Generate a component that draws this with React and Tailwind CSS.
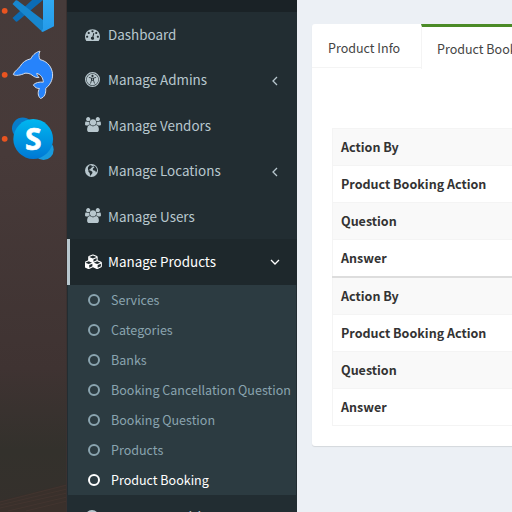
import React from 'react';

const TACHO = "M384 1152q0-53-37.5-90.5t-90.5-37.5-90.5 37.5-37.5 90.5 37.5 90.5 90.5 37.5 90.5-37.5 37.5-90.5zm192-448q0-53-37.5-90.5t-90.5-37.5-90.5 37.5-37.5 90.5 37.5 90.5 90.5 37.5 90.5-37.5 37.5-90.5zm428 481l101-382q6-26-7.5-48.5t-38.5-29.5-48 6.5-30 39.5l-101 382q-60 5-107 43.5t-63 98.5q-20 77 20 146t117 89 146-20 89-117q16-60-6-117t-72-91zm660-33q0-53-37.5-90.5t-90.5-37.5-90.5 37.5-37.5 90.5 37.5 90.5 90.5 37.5 90.5-37.5 37.5-90.5zm-640-640q0-53-37.5-90.5t-90.5-37.5-90.5 37.5-37.5 90.5 37.5 90.5 90.5 37.5 90.5-37.5 37.5-90.5zm448 192q0-53-37.5-90.5t-90.5-37.5-90.5 37.5-37.5 90.5 37.5 90.5 90.5 37.5 90.5-37.5 37.5-90.5zm320 448q0 261-141 483-19 29-54 29h-1402q-35 0-54-29-141-221-141-483 0-182 71-348t191-286 286-191 348-71 348 71 286 191 191 286 71 348z";
const USERS = "M593 896q-162 5-265 128h-134q-82 0-138-40.5t-56-118.5q0-353 124-353 6 0 43.5 21t97.5 42.5 119 21.5q67 0 133-23-5 37-5 66 0 139 81 256zm1071 637q0 120-73 189.5t-194 69.5h-874q-121 0-194-69.5t-73-189.5q0-53 3.5-103.5t14-109 26.5-108.5 43-97.5 62-81 85.5-53.5 111.5-20q10 0 43 21.5t73 48 107 48 135 21.5 135-21.5 107-48 73-48 43-21.5q61 0 111.5 20t85.5 53.5 62 81 43 97.5 26.5 108.5 14 109 3.5 103.5zm-1024-1277q0 106-75 181t-181 75-181-75-75-181 75-181 181-75 181 75 75 181zm704 384q0 159-112.5 271.5t-271.5 112.5-271.5-112.5-112.5-271.5 112.5-271.5 271.5-112.5 271.5 112.5 112.5 271.5zm576 225q0 78-56 118.5t-138 40.5h-134q-103-123-265-128 81-117 81-256 0-29-5-66 66 23 133 23 59 0 119-21.5t97.5-42.5 43.5-21q124 0 124 353zm-128-609q0 106-75 181t-181 75-181-75-75-181 75-181 181-75 181 75 75 181z";
const CUBES = "M512 1664l384-192v-314l-384 164v342zm-64-454l404-173-404-173-404 173zm1088 454l384-192v-314l-384 164v342zm-64-454l404-173-404-173-404 173zm-448-293l384-165v-266l-384 164v267zm-64-379l441-189-441-189-441 189zm1088 518v416q0 36-19 67t-52 47l-448 224q-25 14-57 14t-57-14l-448-224q-4-2-7-4-2 2-7 4l-448 224q-25 14-57 14t-57-14l-448-224q-33-16-52-47t-19-67v-416q0-38 21.5-70t56.5-48l434-186v-400q0-38 21.5-70t56.5-48l448-192q23-10 50-10t50 10l448 192q35 16 56.5 48t21.5 70v400l434 186q36 16 57 48t21 70z";

function Glyph({ kind }) {
  if (kind === 'tacho')
    return <svg className="h-[15px] w-[15px]" viewBox="0 0 1792 1792" fill="currentColor"><path d={TACHO} /></svg>;
  if (kind === 'users')
    return <svg className="h-[15px] w-[16px]" viewBox="0 0 1920 1792" fill="currentColor"><path d={USERS} /></svg>;
  if (kind === 'cubes')
    return <svg className="h-[15px] w-[19px] shrink-0" viewBox="0 0 2304 1792" fill="currentColor"><path d={CUBES} /></svg>;
  if (kind === 'globe')
    return (
      <svg className="h-[13px] w-[13px]" viewBox="0 0 13 13">
        <circle cx="6.5" cy="6.5" r="6.5" fill="currentColor" />
        <path d="M4.2 1.5L6.6 1l-.4 1.2 1.2-.3.5.9-1.8 1.1-.9 1.4-1.3.4.9.8 1.2.2 1.5 1.3-.3 1.4-1.1 1.3-.6 1.2-.6-1.1-.2-1.9-1.3-1.1.1-1L2.9 5 3 3.4zM8.6 1.5l2.1 1.3 1.2 2.3.1 2-1.1 1.4-.6-1.8-1.7-.1-.9-1.4.8-1.3 1.2-.5-1.2-.6z" fill="#222d32" />
      </svg>
    );
  return (
    <svg className="h-[15px] w-[15px]" viewBox="0 0 15 15">
      <circle cx="7.5" cy="7.5" r="6.9" fill="none" stroke="currentColor" strokeWidth="1.2" />
      <circle cx="7.5" cy="7.5" r="5.8" fill="currentColor" />
      <circle cx="7.5" cy="3.9" r="1.1" fill="#222d32" />
      <path d="M3.9 5.4l2.6.7v2.2l-1 3.2M11.1 5.4l-2.6.7v2.2l1 3.2M6.6 6.2h1.8v2.2H6.6z" fill="none" stroke="#222d32" strokeWidth=".8" strokeLinejoin="round" />
    </svg>
  );
}

const menu = [
  ['tacho', 'Dashboard', false],
  ['access', 'Manage Admins', true],
  ['users', 'Manage Vendors', false],
  ['globe', 'Manage Locations', true],
  ['users', 'Manage Users', false],
];
const sub = ['Services', 'Categories', 'Banks', 'Booking Cancellation Question', 'Booking Question', 'Products', 'Product Booking'];
const rows = ['Action By', 'Product Booking Action', 'Question', 'Answer'];

function Group({ second }) {
  return (
    <div className={second ? 'border-t-2 border-[#ddd]' : 'border-t border-[#f4f4f4]'}>
      {rows.map((r, i) => (
        <div key={r} className={`flex items-center border-l border-[#f4f4f4] pl-2 ${i % 2 ? 'bg-white' : 'bg-[#f9f9f9]'} ${i === 3 && !second ? 'h-[36px]' : 'h-[37px] border-b'}`}>
          {r}
        </div>
      ))}
    </div>
  );
}

function Dock() {
  return (
    <div className="h-[512px] w-[67px] shrink-0">
      <svg width="67" height="512" viewBox="0 0 67 512">
        <defs>
          <linearGradient id="wall" x1="0" y1="0" x2="0" y2="1">
            <stop offset="0" stopColor="#463b3a" />
            <stop offset=".3" stopColor="#473a39" />
            <stop offset=".72" stopColor="#3f3332" />
            <stop offset=".88" stopColor="#33312c" />
            <stop offset="1" stopColor="#35302c" />
          </linearGradient>
          <linearGradient id="sky" x1="0" y1="0" x2="0" y2="1">
            <stop offset="0" stopColor="#00b7f0" />
            <stop offset="1" stopColor="#0078d4" />
          </linearGradient>
          <linearGradient id="code" x1="0" y1="0" x2="0" y2="1">
            <stop offset="0" stopColor="#35b0f5" />
            <stop offset="1" stopColor="#259bea" />
          </linearGradient>
        </defs>
        <rect width="67" height="512" fill="url(#wall)" />
        <path d="M0 501L67 484V512H0z" fill="#3d302c" opacity=".6" />
        <g stroke="#58403a" strokeWidth=".8" opacity=".35">
          <path d="M0 502L67 485M0 505L67 489M0 508L67 493M8 511L67 497M26 511L67 501" />
        </g>
        <rect x="66" width="1" height="512" fill="#3a3130" />
        <g fill="#e95420">
          <circle cx="4.7" cy="10.8" r="2.9" />
          <circle cx="4.7" cy="74.8" r="2.9" />
          <circle cx="4.7" cy="138.8" r="2.9" />
        </g>
        <path d="M12.5 18L15.8 21.4Q16.6 22 17.6 21.3L43 0V-10z" fill="#0b6cb5" />
        <path d="M12.5 4L15.5.6Q16.6-.2 17.8.7L43 20V31.8Q41.8 31.5 40 29.8z" fill="#1787cf" />
        <path d="M43-14L54-10V26.3L43.2 31.8Q42.4 32 41.3 31.2L43 29z" fill="url(#code)" />
        <path d="M40 51.2C37 51.7 33 54.2 30.8 58.8C26 59.8 22.5 62.3 20.2 66.2C18.4 69.3 14.3 70.8 13.3 74.5C15.2 76.2 21 75.2 25 73.2C28 73 30 73.7 32 75.1C34 76.8 36.4 78 39 77.4C37.7 76.2 37 75.1 36.7 73.4C40.3 74.2 43.3 77.6 43.3 82.2C39 81.7 35.4 82.7 33.3 84.9C35.2 87.7 37 88.5 39.5 88.5C37.6 91.7 37.7 96 40.5 98.5C44.5 97.5 46.1 93.4 45.7 88.4C51.2 84.2 53.6 77.5 52.2 71.5C50.5 64.9 45.9 61 40 59.6C38.6 56.5 38.7 53.8 40 51.2Z" fill="#2683fb" stroke="#d5dce8" strokeWidth="1" strokeLinejoin="round" />
        <circle cx="22.7" cy="128.3" r="10.7" fill="#087cca" />
        <circle cx="43.5" cy="149.8" r="10.2" fill="#199bdd" />
        <circle cx="33.2" cy="139" r="19.9" fill="url(#sky)" />
        <text x="33.2" y="150" textAnchor="middle" fontFamily="Open Sans, sans-serif" fontSize="30" fontWeight="700" fill="white" stroke="white" strokeWidth=".6">S</text>
      </svg>
    </div>
  );
}

export default function App() {
  return (
    <div className="flex h-[512px] w-[512px] overflow-hidden bg-[#ecf0f5] font-['Noto_Sans_CJK_SC',sans-serif] whitespace-nowrap">
      <Dock />
      <aside className="h-[512px] w-[230px] shrink-0 overflow-hidden bg-[#222d32] text-[13.43px] text-[#b8c7ce]">
        <div className="h-3 bg-[#1a2226]" />
        {menu.map(([kind, label, arrow]) => (
          <div key={label} className="flex h-[45.4px] items-center pb-[1.2px] pl-[18px] leading-[20px]">
            <span className="flex w-[23px] shrink-0 items-center"><Glyph kind={kind} /></span>
            <span>{label}</span>
            {arrow && (
              <svg className="mt-[3px] mr-[19px] ml-auto" width="6" height="10" viewBox="0 0 6 10" fill="none" stroke="currentColor" strokeWidth="1.3"><path d="M5 1L1 5l4 4" /></svg>
            )}
          </div>
        ))}
        <div className="flex h-[46px] items-center border-l-3 border-[#b8c7ce] bg-[#1e282c] pb-[1.2px] pl-[15px] leading-[20px] text-white">
          <span className="flex w-[23px] shrink-0 items-center"><Glyph kind="cubes" /></span>
          <span>Manage Products</span>
          <svg className="mt-[2px] mr-[17px] ml-auto" width="10" height="6" viewBox="0 0 10 6" fill="none" stroke="currentColor" strokeWidth="1.3"><path d="M1 1l4 4 4-4" /></svg>
        </div>
        <div className="mr-px ml-px bg-[#2c3b41] text-[12.53px]">
          {sub.map((s) => (
            <div key={s} className={`flex h-[30px] items-center pl-[20px] leading-[20px] ${s === 'Product Booking' ? 'text-white' : 'text-[#8aa4af]'}`}>
              <svg className="mr-[11px] shrink-0" width="12" height="12" viewBox="0 0 12 12" fill="none" stroke="currentColor" strokeWidth="2"><circle cx="6" cy="6" r="5" /></svg>
              <span>{s}</span>
            </div>
          ))}
        </div>
        <div className="flex h-[45px] items-center pl-[18px] leading-[20px]">
          <span className="w-[23px] shrink-0"><svg width="15" height="15" viewBox="0 0 15 15" fill="none" stroke="currentColor" strokeWidth="2"><circle cx="7" cy="7" r="6" /></svg></span>
          <span className="pb-[3px]">Manage Inquiries</span>
        </div>
      </aside>
      <main className="min-w-0 flex-1 overflow-hidden pt-6 pl-[15px]">
        <section className="h-[422px] w-[400px] rounded-[3px] bg-white shadow-[0_1px_1px_rgba(0,0,0,0.1)]">
          <div className="flex h-[44px] border-b border-[#f4f4f4] text-[12.53px] leading-[20px] text-[#444]">
            <div className="flex w-[109px] items-center pt-[5px] pl-4">Product Info</div>
            <div className="flex h-[45px] flex-1 items-center border-t-3 border-l border-t-[#4b8b27] border-l-[#f4f4f4] bg-white pt-[2px] pl-[15px]">Product Booking</div>
          </div>
          <div className="pt-[60px] pl-5 text-[12.53px] leading-[20px] font-bold text-[#333]">
            <Group />
            <Group second />
          </div>
        </section>
      </main>
    </div>
  );
}
